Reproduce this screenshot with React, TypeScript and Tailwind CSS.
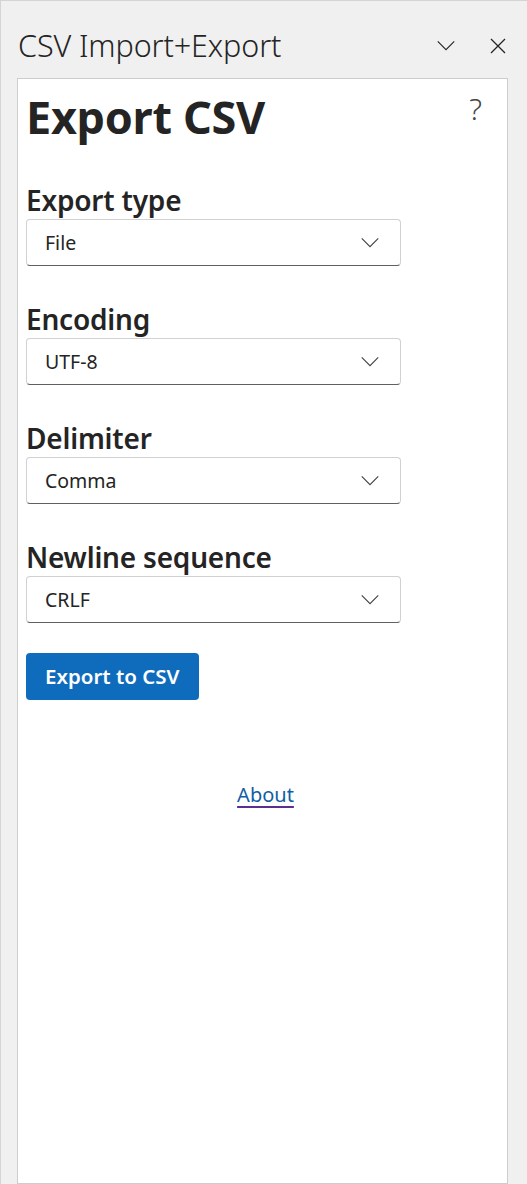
const fields = [
  { label: "Export type", value: "File" },
  { label: "Encoding", value: "UTF-8" },
  { label: "Delimiter", value: "Comma" },
  { label: "Newline sequence", value: "CRLF" },
];

function Chevron({ className }: { className?: string }) {
  return (
    <svg viewBox="0 0 20 12" className={className} fill="none">
      <path d="M1 1.5 10 10.5 19 1.5" stroke="currentColor" strokeWidth="1.2" />
    </svg>
  );
}

function Close({ className }: { className?: string }) {
  return (
    <svg viewBox="0 0 16 16" className={className} fill="none">
      <path d="M1 1 15 15M15 1 1 15" stroke="currentColor" strokeWidth="1.3" />
    </svg>
  );
}

export default function App() {
  return (
    <div
      className="h-[1184px] w-[527px] overflow-hidden bg-[#f0f0f0] text-[#242424]"
      style={{ fontFamily: '"Noto Sans", "Open Sans", sans-serif' }}
    >
      <div className="flex h-full flex-col border-t border-l border-[#d4d4d4] pr-[19px]">
        {/* task pane header */}
        <div className="flex h-[77px] items-center pl-[17px] pt-[12px]">
          <h1 className="flex-1 text-[30.5px] font-light tracking-[-0.1px] text-[#242424]">
            CSV Import+Export
          </h1>
          <Chevron className="mr-[34px] h-[11px] w-[20px] text-[#242424]" />
          <Close className="mr-[2px] h-[16px] w-[16px] text-[#242424]" />
        </div>

        <div className="ml-[16px] flex-1 border border-[#cdcdcd] bg-white px-[8px]">
          <div className="flex items-start justify-between">
            <h2 className="pt-[8px] text-[45px] font-bold leading-[60px] tracking-[-0.3px]">
              Export CSV
            </h2>
            <span className="mr-[17px] mt-[15px] text-[30px] font-light leading-none text-[#444]">
              ?
            </span>
          </div>

          <div className="mt-[39px] flex flex-col gap-[39px]">
            {fields.map((f) => (
              <div key={f.label}>
                <label className="block text-[28px] font-semibold leading-[29px] tracking-[-0.2px]">
                  {f.label}
                </label>
                <div className="mt-[4px] flex h-[47px] w-[375px] items-center justify-between rounded-[4px] border border-[#d1d1d1] border-b-[#616161] pl-[18px] pr-[20px]">
                  <span className="text-[19.5px] text-[#242424]">{f.value}</span>
                  <Chevron className="h-[11px] w-[20px] text-[#424242]" />
                </div>
              </div>
            ))}
          </div>

          <button className="mt-[30px] h-[47px] rounded-[4px] bg-[#0f6cbd] px-[19px] text-[20.5px] font-semibold text-white">
            Export to CSV
          </button>

          <div className="mt-[80px] pl-[6px] text-center">
            <a
              href="#"
              className="text-[20px] text-[#115ea3] underline decoration-[#5c2e91] underline-offset-[4px]"
            >
              About
            </a>
          </div>
        </div>
      </div>
    </div>
  );
}
